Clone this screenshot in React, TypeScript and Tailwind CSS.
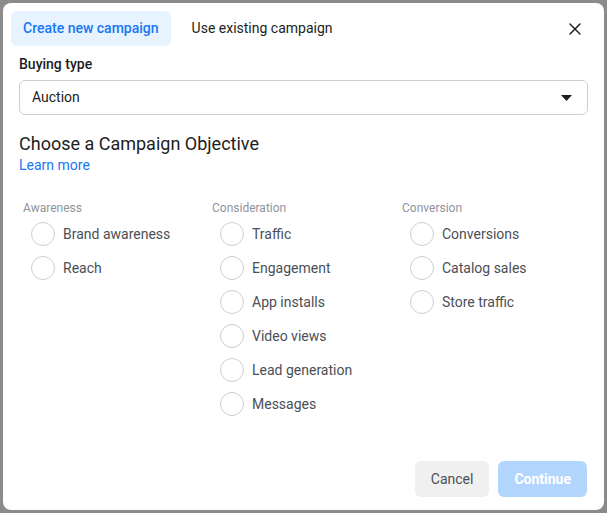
import { X } from 'lucide-react';

const columns = [
  { title: 'Awareness', items: ['Brand awareness', 'Reach'] },
  { title: 'Consideration', items: ['Traffic', 'Engagement', 'App installs', 'Video views', 'Lead generation', 'Messages'] },
  { title: 'Conversion', items: ['Conversions', 'Catalog sales', 'Store traffic'] },
];

function Radio({ label }: { label: string }) {
  return (
    <label className="flex h-[34px] items-center gap-[8px] pl-[8px]">
      <span className="h-[24px] w-[24px] rounded-full border border-[#ccd0d5] bg-white" />
      <span className="text-[14px] text-[#4b4f56]">{label}</span>
    </label>
  );
}

export default function App() {
  return (
    <div className="h-[513px] w-[607px] overflow-hidden bg-[#8b8b8b] p-[3px]" style={{ fontFamily: 'Roboto, "Liberation Sans", sans-serif' }}>
      <div className="flex h-[507px] flex-col rounded-[8px] bg-white px-[8px] pt-[8px]">
        {/* tabs */}
        <div className="flex items-center">
          <button className="h-[35px] rounded-[6px] bg-[#e7f3ff] px-[12px] text-[14px] font-medium text-[#1877f2]">
            Create new campaign
          </button>
          <button className="ml-[9px] h-[35px] px-[12px] text-[14px] text-[#1c1e21]">Use existing campaign</button>
          <button className="ml-auto mr-[11px] text-[#1c1e21]">
            <X size={20} strokeWidth={1.7} />
          </button>
        </div>

        <div className="px-[8px]">
          <div className="mt-[8px] text-[14px] font-medium text-[#1c1e21]">Buying type</div>
          <div className="mt-[5px] flex h-[35px] items-center justify-between rounded-[6px] border border-[#ccd0d5] pl-[12px] pr-[15px] text-[14px] text-[#1c1e21]">
            <span>Auction</span>
            <svg width="11" height="6" viewBox="0 0 11 6">
              <path d="M0 0h11L5.5 6z" fill="#1c1e21" />
            </svg>
          </div>

          <div className="mt-[18px] text-[18px] leading-[22px] text-[#1c1e21]">Choose a Campaign Objective</div>
          <a className="block text-[14px] leading-[20px] text-[#1877f2]">Learn more</a>

          <div className="mt-[25px] grid grid-cols-[189px_190px_190px] pl-[4px]">
            {columns.map((c) => (
              <div key={c.title}>
                <div className="mb-[1px] text-[12px] leading-[16px] text-[#90949c]">{c.title}</div>
                {c.items.map((i) => (
                  <Radio key={i} label={i} />
                ))}
              </div>
            ))}
          </div>
        </div>

        <div className="mt-auto mb-[13px] flex justify-end gap-[9px] pr-[9px]">
          <button className="h-[36px] rounded-[6px] bg-[#f0f0f0] px-[16px] text-[14px] text-[#4b4f56]">Cancel</button>
          <button className="h-[36px] rounded-[6px] bg-[#b3d6ff] px-[16px] text-[14px] font-bold text-white">Continue</button>
        </div>
      </div>
    </div>
  );
}
